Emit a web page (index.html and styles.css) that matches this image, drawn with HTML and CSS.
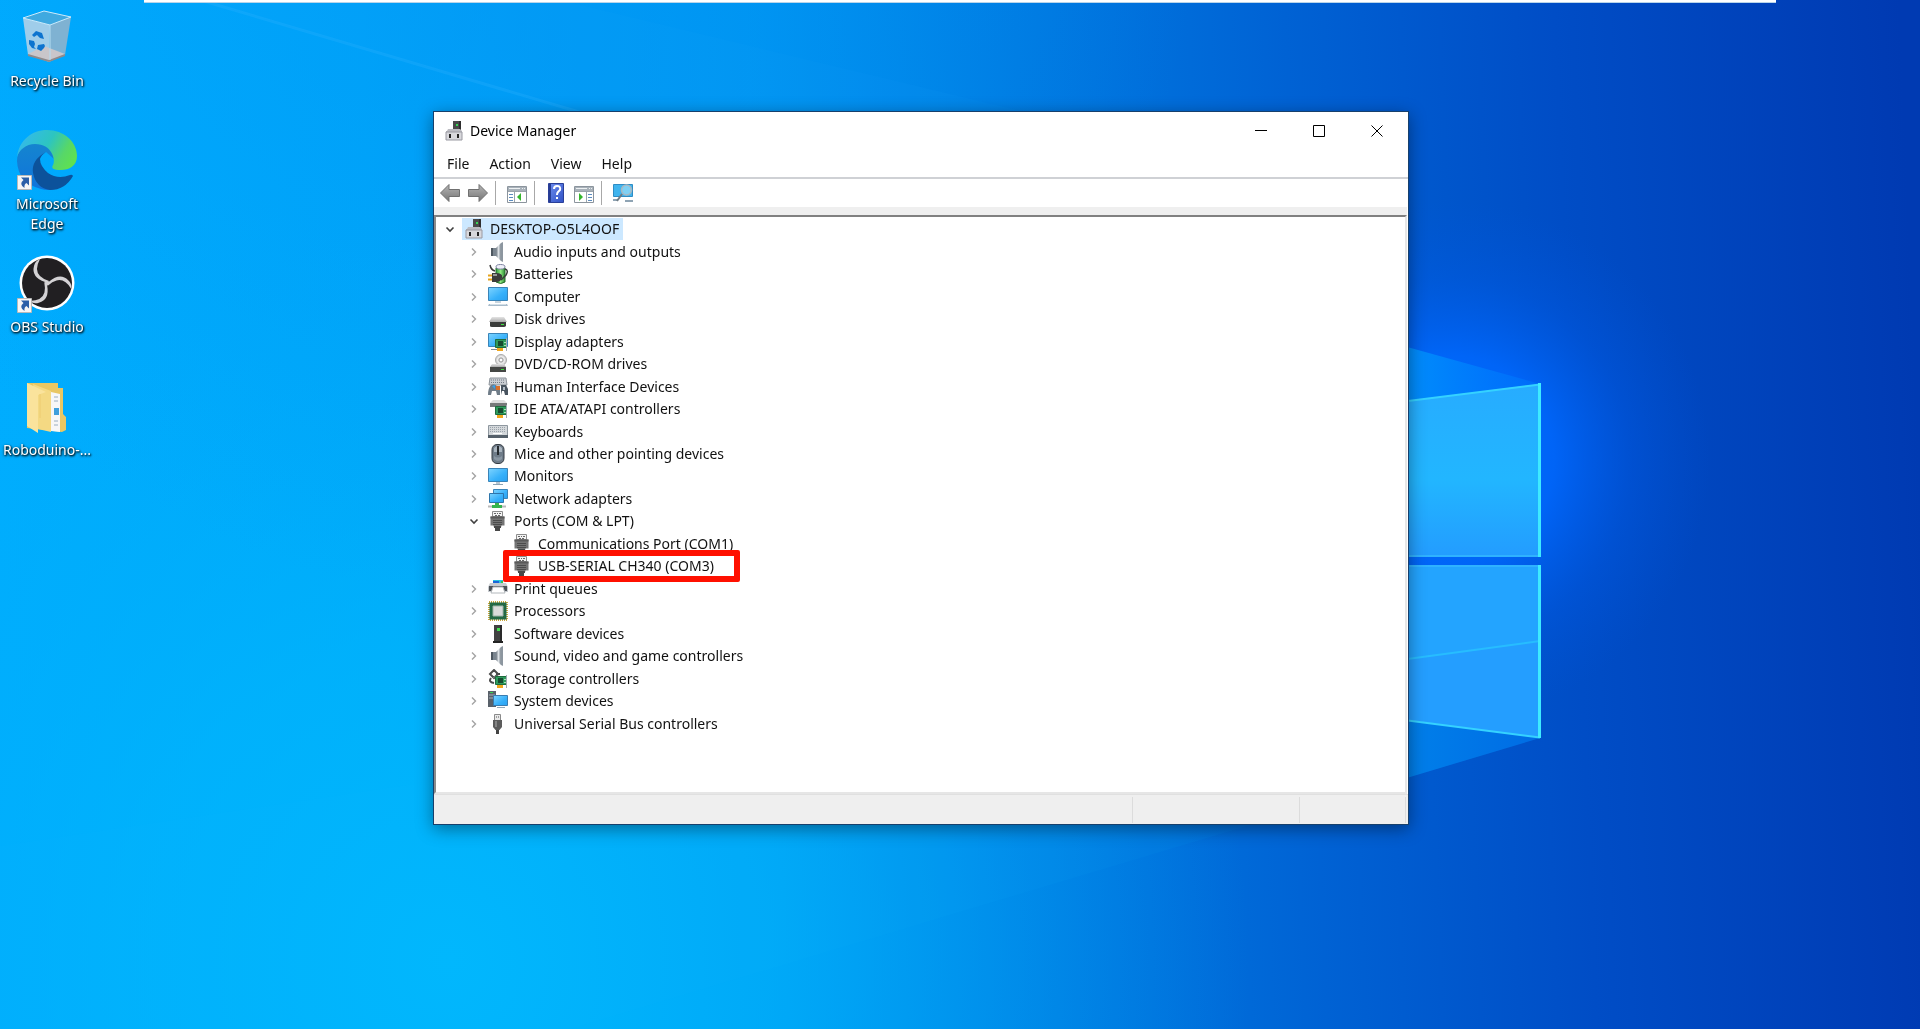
FILE: index.html
```html
<!DOCTYPE html>
<html lang="en">
<head>
<meta charset="utf-8">
<title>Device Manager</title>
<link rel="stylesheet" href="styles.css">
</head>
<body>
<svg class="defs" aria-hidden="true">
  <defs>
    <linearGradient id="g-screen" x1="0" y1="0" x2="1" y2="1"><stop offset="0" stop-color="#7ed4ff"/><stop offset="0.6" stop-color="#36b0fa"/><stop offset="1" stop-color="#2aa0f0"/></linearGradient>
    <linearGradient id="g-arrow" x1="0" y1="0" x2="0" y2="1"><stop offset="0" stop-color="#b5b5b5"/><stop offset="1" stop-color="#757575"/></linearGradient>
    <linearGradient id="g-metal" x1="0" y1="0" x2="1" y2="0"><stop offset="0" stop-color="#6c7680"/><stop offset="0.5" stop-color="#dde2e6"/><stop offset="1" stop-color="#7f8992"/></linearGradient>
    <linearGradient id="g-help" x1="0" y1="0" x2="1" y2="1"><stop offset="0" stop-color="#6f8ff0"/><stop offset="1" stop-color="#2f50c4"/></linearGradient>
    <linearGradient id="g-battery" x1="0" y1="0" x2="1" y2="0"><stop offset="0" stop-color="#2c9a3a"/><stop offset="0.5" stop-color="#8eea80"/><stop offset="1" stop-color="#2a8a34"/></linearGradient>
    <linearGradient id="g-drive" x1="0" y1="0" x2="0" y2="1"><stop offset="0" stop-color="#e4e4e4"/><stop offset="1" stop-color="#a9a9a9"/></linearGradient>
    <symbol id="pc" viewBox="0 0 20 20"><path d="M9 0h8v10H9z" fill="#4a4a4a"/><path d="M15 0h2v10h-2z" fill="#2e2e2e"/><path d="M12 3h2v2h-2z" fill="#35d655"/><path d="M3 10l1-2h12l2 2v2H2v-2z" fill="#bcbcc2"/><path d="M2 11h16v8H2z" fill="#d8d8dc" stroke="#9a9aa2"/><path d="M5 13h2v4H5zM13 13h2v4h-2z" fill="#222"/></symbol>
    <symbol id="speaker" viewBox="0 0 20 20"><path d="M3 6h5v8H3z" fill="#7a858f"/><path d="M3 6h2v8H3z" fill="#4d5760"/><path d="M8 6l5-5v18l-5-5z" fill="url(#g-metal)"/><path d="M13 1l2-1v20l-2-1z" fill="#8c969f"/></symbol>
    <symbol id="battery" viewBox="0 0 20 20"><path d="M8 4h9v14q-4 3-9 0z" fill="url(#g-battery)" stroke="#286c2c"/><ellipse cx="12.500" cy="2.800" rx="4.500" ry="2.300" fill="#eef0f8" stroke="#7c7fa0"/><path d="M2 1q1 5 5 6M17 5q4 1 1 6l-5 5" fill="none" stroke="#3a3a3a" stroke-width="1.500"/><path d="M0 11.500h5M0 15.500h5" stroke="#e5a31c" stroke-width="2"/><path d="M4 9h4q7 0 6 4.500T8 18H4z" fill="#3c3c3c"/><path d="M5 10h4v2H5z" fill="#999"/></symbol>
    <symbol id="computer" viewBox="0 0 20 20"><path d="M.5.5h19v13H.5z" fill="url(#g-screen)" stroke="#3a84b8"/><path d="M7 14h6v2H7z" fill="#c9d5de"/><path d="M1 17h18l1 2H0z" fill="#a9bccb"/><path d="M2 17.500h16" stroke="#d3dfe8"/></symbol>
    <symbol id="monitor" viewBox="0 0 20 20"><path d="M.5 2.500h19v13H.5z" fill="url(#g-screen)" stroke="#3a84b8"/><path d="M8 16h4v2H8z" fill="#b9c7d2"/><path d="M5 18h10v1H5z" fill="#8ea3b3"/></symbol>
    <symbol id="disk" viewBox="0 0 20 20"><path d="M4 8h12l3 5H1z" fill="url(#g-drive)"/><path d="M2 13h16v4q-1 1-2 1H4q-2 0-2-1z" fill="#3b3d3b"/><path d="M13 15h3v1h-3z" fill="#3ee03e"/></symbol>
    <symbol id="card" viewBox="0 0 20 20"><path d="M7.500 7.500h11v8h-11z" fill="#2f9a5c" stroke="#1d6b3d"/><path d="M10 9h5v5h-5z" fill="#164a30"/><path d="M16 10h2v1h-2zM16 13h2v1h-2z" fill="#a8e0b8"/><path d="M9 16h6v3H9z" fill="#f0a71d"/><path d="M18 6h1v13h-1z" fill="#a3acb3"/></symbol>
    <symbol id="display" viewBox="0 0 20 20"><path d="M.5 1.500h19v13H.5z" fill="url(#g-screen)" stroke="#3a84b8"/><path d="M3 17h6v1H3z" fill="#7f8a93"/><use href="#card"/></symbol>
    <symbol id="dvd" viewBox="0 0 20 20"><circle cx="13" cy="6" r="5.500" fill="#d9d9d9" stroke="#aaa"/><circle cx="13" cy="6" r="3.500" fill="none" stroke="#f0f0f0"/><circle cx="13" cy="6" r="2" fill="#fff" stroke="#999"/><path d="M4 10h12l2 3H2z" fill="url(#g-drive)"/><path d="M2 13h16v5H2z" fill="#454745"/><path d="M13 15h3v1h-3z" fill="#3ee03e"/></symbol>
    <symbol id="hid" viewBox="0 0 20 20"><path d="M2 1h16l1 7H1z" fill="#c9cdd2" stroke="#8d949b"/><path d="M3 3h14M3 5.500h14" stroke="#737b84" stroke-dasharray="1 1"/><path d="M3 8q3-2 6 1l3 0 0 9h-3l-1-4H4l-1 4H0q0-7 3-10z" fill="#6f7c88"/><path d="M4 9l3-1v4z" fill="#37a1ef"/><path d="M8 9h4v4H8z" fill="#da6f28"/><path d="M13 8h5l2 4v6h-3l-1-4h-2l-1 4z" fill="#48545f"/><path d="M15 10h2v3h-2z" fill="#b3bec8"/></symbol>
    <symbol id="ide" viewBox="0 0 20 20"><path d="M5 1h11l3 3H2z" fill="#dedede"/><path d="M2 4h17v4H2z" fill="#777a7a"/><use href="#card"/></symbol>
    <symbol id="keyboard" viewBox="0 0 20 20"><path d="M.5 3.500h19v11H.5z" fill="#d4d8db" stroke="#8e979f"/><path d="M2 5.500h16M2 7.500h16M2 9.500h16" stroke="#9aa2aa" stroke-dasharray="1 1"/><path d="M5 11.500h9" stroke="#fff"/><path d="M0 13h20v3H0z" fill="#55606a"/></symbol>
    <symbol id="mouse" viewBox="0 0 20 20"><rect x="4" y="0.500" width="12" height="19" rx="5" fill="#6f7c89" stroke="#343b42"/><path d="M6 4q4-4 8 0v4H6z" fill="#a9b4be"/><path d="M9 2h2v9H9z" fill="#252a2f"/><path d="M6 12q4 3 8 0v3q-4 4-8 0z" fill="#8996a2"/></symbol>
    <symbol id="network" viewBox="0 0 20 20"><path d="M5.500.5h14v9h-14z" fill="url(#g-screen)" stroke="#3a84b8"/><path d="M1.500 4.500h14v9h-14z" fill="url(#g-screen)" stroke="#2d75ab"/><path d="M7 14h4v3H7z" fill="#39b54a"/><path d="M4 16h10v3H4z" fill="#35b44e"/><path d="M0 17.500h4M14 17.500h4" stroke="#b9b9b9" stroke-width="2"/></symbol>
    <symbol id="port" viewBox="0 0 20 20"><path d="M4.500.5h10v5h-10z" fill="#f3f3f3" stroke="#8c8c8c"/><path d="M6 2.500h2M9 2.500h1M11 2.500h2M7 4.500h2M10 4.500h2" stroke="#666"/><path d="M2.500 5.500h14v9h-3v1h-8v-1h-3z" fill="#747474"/><path d="M2.500 5.500h14v2h-14z" fill="#5a5a5a"/><path d="M5 9.500h9M5 11.500h9M5 13.500h9" stroke="#4c4c4c"/><path d="M6 15h7v2h-1v3H7v-3H6z" fill="#484848"/></symbol>
    <symbol id="printer" viewBox="0 0 20 20"><path d="M5 1h10v4H5z" fill="#28c3e0"/><path d="M5 2h6v3H5z" fill="#1b65d8"/><path d="M13 2h2v2h-2z" fill="#36c24c"/><path d="M2 4h16l2 4v5H0V8z" fill="#c7cbd0"/><path d="M1 7h18v5H1z" fill="#4d5359"/><path d="M5 8h10l2 6H3z" fill="#fff" stroke="#b3b8bc"/></symbol>
    <symbol id="cpu" viewBox="0 0 20 20"><path d="M1 1h18v18H1z" fill="none" stroke="#c8a63a" stroke-width="2" stroke-dasharray="1 1"/><path d="M1.500 1.500h17v17h-17z" fill="#236a45"/><path d="M5 5h10v10H5z" fill="#d9dcdb" stroke="#9fb5a8"/></symbol>
    <symbol id="tower" viewBox="0 0 20 20"><path d="M6 1h8v16H6z" fill="#414141"/><path d="M12 1h2v16h-2z" fill="#2a2a2a"/><path d="M9 4h3v3H9z" fill="#42e050"/><path d="M5 17h10v2H5z" fill="#232323"/></symbol>
    <symbol id="storage" viewBox="0 0 20 20"><path d="M2 5l4-4 4 4-4 4zM8 5h4M3 9q-3 4 3 5" fill="none" stroke="#4b4b4b" stroke-width="2"/><path d="M5 9q4-4 8 0" stroke="#8a8a8a" fill="none"/><use href="#card"/></symbol>
    <symbol id="system" viewBox="0 0 20 20"><path d="M0 0h8v16H0z" fill="#59616a"/><path d="M1 4h6M1 7h4" stroke="#a7b0b8"/><path d="M2 1h3v1H2z" fill="#3bd351"/><path d="M5.500 4.500h14v10h-14z" fill="url(#g-screen)" stroke="#3a7cb0"/><path d="M9 16h8v1H9z" fill="#93a8b8"/></symbol>
    <symbol id="usb" viewBox="0 0 20 20"><path d="M6.500.5h6v6h-6z" fill="#e9e9e9" stroke="#8a8a8a"/><path d="M8 3h1M10 3h1" stroke="#555"/><path d="M5 6h9v7l-2.500 3h-4L5 13z" fill="#5c5c5c"/><path d="M7 7h2v6H7z" fill="#858585"/><path d="M8 16h3v4H8z" fill="#444"/></symbol>
    <symbol id="closed" viewBox="0 0 12 12"><path d="M4 2.500L7.500 6 4 9.500" fill="none" stroke="#a3a3a3" stroke-width="1.400"/></symbol>
    <symbol id="open" viewBox="0 0 12 12"><path d="M2.500 4.500L6 8l3.500-3.500" fill="none" stroke="#404040" stroke-width="1.600"/></symbol>
    <symbol id="shortcut" viewBox="0 0 15 15"><path d="M.5.5h14v14H.5z" fill="#f6f6f6" stroke="#b9b9b9"/><path d="M4 2.500h8v8L9.500 8Q7 9 7.500 13 1.500 9 6.500 5z" fill="#2c5fa8"/></symbol>
  </defs>
</svg>

<svg class="wallpaper" viewBox="0 0 1920 1029" preserveAspectRatio="none" aria-hidden="true">
  <defs>
    <linearGradient id="w-base" gradientUnits="userSpaceOnUse" x1="0" y1="560" x2="1920" y2="480">
      <stop offset="0" stop-color="#00adff"/><stop offset="0.200" stop-color="#00a8fb"/><stop offset="0.400" stop-color="#0096f2"/><stop offset="0.540" stop-color="#007be2"/><stop offset="0.680" stop-color="#0062d4"/><stop offset="0.820" stop-color="#004dc6"/><stop offset="1" stop-color="#003ab2"/>
    </linearGradient>
    <radialGradient id="w-low" gradientUnits="userSpaceOnUse" cx="450" cy="960" r="800"><stop offset="0" stop-color="#00b8fd" stop-opacity="0.950"/><stop offset="0.400" stop-color="#00b6fb" stop-opacity="0.600"/><stop offset="1" stop-color="#00a8f5" stop-opacity="0"/></radialGradient>
    <radialGradient id="w-top" gradientUnits="userSpaceOnUse" cx="500" cy="-100" r="700"><stop offset="0" stop-color="#0092f2" stop-opacity="0.500"/><stop offset="1" stop-color="#0096f5" stop-opacity="0"/></radialGradient>
    <radialGradient id="w-glow" gradientUnits="userSpaceOnUse" cx="1450" cy="460" r="260"><stop offset="0" stop-color="#0070ff"/><stop offset="0.400" stop-color="#0068ff" stop-opacity="0.850"/><stop offset="0.700" stop-color="#005cec" stop-opacity="0.350"/><stop offset="1" stop-color="#0055dc" stop-opacity="0"/></radialGradient>
    <linearGradient id="w-pane" x1="0" y1="0" x2="0" y2="1"><stop offset="0" stop-color="#27acff"/><stop offset="0.550" stop-color="#22b6ff"/><stop offset="1" stop-color="#239cff"/></linearGradient>
    <linearGradient id="w-ray" x1="0" y1="0" x2="1" y2="0"><stop offset="0" stop-color="#0090fb"/><stop offset="1" stop-color="#0078ff" stop-opacity="0.400"/></linearGradient>
    <linearGradient id="w-ray-low" x1="0" y1="0" x2="1" y2="0"><stop offset="0" stop-color="#0080ea"/><stop offset="1" stop-color="#006ce4"/></linearGradient>
  </defs>
  <path d="M0 0h1920v1029H0z" fill="url(#w-base)"/>
  <path d="M0 0h1920v1029H0z" fill="url(#w-low)"/>
  <path d="M0 0h1920v1029H0z" fill="url(#w-top)"/>
  <path d="M200 0L640 130H1100L560 0z" fill="#20a8ff" opacity="0.060"/>
  <path d="M200 0L640 130" stroke="#34b4ff" stroke-width="3" opacity="0.250"/>
  <path d="M0 846L440 780 1540 738 570 1029H0z" fill="#10c0ff" opacity="0.060"/>
  <path d="M1190 0h730v1029h-730z" fill="url(#w-glow)"/>
  <path d="M1400 345L1540 384 1400 402z" fill="url(#w-ray)"/>
  <path d="M1400 719L1540 738 1400 780z" fill="url(#w-ray-low)"/>
  <path d="M1400 402L1540 384V557H1400z" fill="url(#w-pane)"/>
  <path d="M1400 565H1540V738L1400 719z" fill="#249eff"/>
  <path d="M1400 565H1540V641L1400 660z" fill="#23a4ff"/>
  <path d="M1400 660L1540 641" stroke="#27bdff" stroke-width="2"/>
  <path d="M1400 556H1540M1400 566H1540" stroke="#2fb2ff" stroke-width="2"/>
  <path d="M1400 402L1540 384.500M1400 719.500L1540 737.500" stroke="#35d2ff" stroke-width="2"/>
  <path d="M1539.500 383V557M1539.500 565V738" stroke="#3eeaff" stroke-width="3"/>
</svg>

<main class="desktop">
  <div class="top-strip"></div>

  <nav class="shortcuts" aria-label="Desktop">
    <a class="shortcut" href="#recycle">
      <svg class="shortcut-icon" viewBox="0 -3 60 60"><path d="M6 8L33 15 32 50 11 45z" fill="#9fcdea"/><path d="M33 15L54 7 48 45 32 50z" fill="#7fb2d2"/><path d="M6 8L27 1 54 7 33 15z" fill="#3fa9e0" stroke="#cdeafa"/><path d="M11 44L27 36 48 44 32 52z" fill="#c9c6ca"/><path d="M11 44v2l21 6v-2zM32 50l16-6v2l-16 6z" fill="#8f8a8c"/><path d="M33 15v35" stroke="#b5ddf2"/><path d="M15 25l4-4 6 2 2 6-4-1-3-3-3 2zM12 30l5 1 1 3-1 3 2 2-4-1-3-4zM21 35l6-1 1 2-1 2-3 3-4-2z" fill="#0d74cf"/></svg>
      <span>Recycle Bin</span>
    </a>
    <a class="shortcut" href="#edge">
      <svg class="shortcut-icon" viewBox="0 0 60 60">
        <defs>
          <linearGradient id="e-top" x1="0" y1="0.200" x2="1" y2="0.600"><stop offset="0" stop-color="#35b8f0"/><stop offset="0.500" stop-color="#2dc5c0"/><stop offset="0.800" stop-color="#57d768"/><stop offset="1" stop-color="#5fe052"/></linearGradient>
          <linearGradient id="e-mid" x1="0" y1="0" x2="0" y2="1"><stop offset="0" stop-color="#1585cf"/><stop offset="1" stop-color="#0f74dc"/></linearGradient>
        </defs>
        <path d="M0 31C0 20 8 13 18 13 31 13 37 22 37 29L29 22Q20 28 21 40 23 55 38 59 31 61 24 59 1 53 0 31z" fill="url(#e-mid)"/>
        <path d="M29 22Q14 30 16 43 19 58 33 60 48 60 56 46 55 44 53 45 41 50 31 43 23 36 23 29 24 25 29 22z" fill="#0c529b"/>
        <path d="M0 27C2 10 15 0 30 0 47 0 60 12 60 26 60 36 52 40 44 40 36 40 34 38 36 35 39 30 35 14 18 14 9 14 2 20 0 27z" fill="url(#e-top)"/>
        <use href="#shortcut" x="0" y="45" width="15" height="15"/>
      </svg>
      <span>Microsoft Edge</span>
    </a>
    <a class="shortcut" href="#obs">
      <svg class="shortcut-icon" viewBox="0 0 60 60">
        <defs><path id="arm" d="M30 32L28 29Q14 24 17 13 18 8 23 6 17 17 23 23 26 26 32 28z" fill="#d4d2d5"/></defs>
        <circle cx="30" cy="30" r="27.500" fill="#fff"/><circle cx="30" cy="30" r="25" fill="#211f22"/>
        <use href="#arm"/><use href="#arm" transform="rotate(120 30 30)"/><use href="#arm" transform="rotate(240 30 30)"/>
        <use href="#shortcut" x="0" y="45" width="15" height="15"/>
      </svg>
      <span>OBS Studio</span>
    </a>
    <a class="shortcut" href="#roboduino">
      <svg class="shortcut-icon" viewBox="0 -3 60 60"><path d="M10 4h31v5h5v26l3 3v13l-4 2-35-4z" fill="#e9c763"/><path d="M34 13l9 2v38l-9-1z" fill="#f7f7f7"/><path d="M37 18h4M37 22h4M37 42h4M37 46h4" stroke="#9aaec0"/><path d="M37 29h5v7h-5z" fill="#3f9fdc"/><path d="M16 5l18 7v41l-13-3z" fill="#f4d983"/><path d="M10 4l19 9-8 3v38L10 47z" fill="#fae39c"/><path d="M23 15v24" stroke="#edcc70"/></svg>
      <span>Roboduino-...</span>
    </a>
  </nav>

  <section class="window" aria-label="Device Manager">
    <header class="titlebar">
      <svg class="icon"><use href="#pc"/></svg>
      <h1>Device Manager</h1>
      <div class="caption-buttons">
        <button type="button" aria-label="Minimize"><svg viewBox="0 0 12 12"><path d="M0 5.500h12" stroke="#000"/></svg></button>
        <button type="button" aria-label="Maximize"><svg viewBox="0 0 12 12"><path d="M.5.5h11v11H.5z" fill="none" stroke="#000"/></svg></button>
        <button type="button" aria-label="Close"><svg viewBox="0 0 12 12"><path d="M.5.5l11 11M11.500.5l-11 11" stroke="#000"/></svg></button>
      </div>
    </header>
    <nav class="menubar" aria-label="Menu">
      <button type="button">File</button><button type="button">Action</button><button type="button">View</button><button type="button">Help</button>
    </nav>
    <div class="toolbar">
      <button type="button" aria-label="Back"><svg class="icon" viewBox="0 0 20 20"><path d="M.5 10L9 1.500V6.500h10.500v7H9v5z" fill="url(#g-arrow)" stroke="#707070"/></svg></button>
      <button type="button" aria-label="Forward"><svg class="icon" viewBox="0 0 20 20"><path d="M19.500 10L11 1.500V6.500H.5v7H11v5z" fill="url(#g-arrow)" stroke="#707070"/></svg></button>
      <span class="divider"></span>
      <button type="button" aria-label="Show console tree"><svg class="icon" viewBox="0 0 20 20"><path d="M.5 3.500h19v16H.5z" fill="#fff" stroke="#8b949d"/><path d="M1 4h18v4H1z" fill="#a9b2ba"/><path d="M2 5.500h11M15 5.500h1M17 5.500h1" stroke="#eef1f3"/><path d="M7.500 9v10M1 8.500h18" stroke="#9aa3ab"/><path d="M2 11.500h4M2 14.500h4M2 17.500h4" stroke="#5b8cc0"/><path d="M14 10v8l-4-4z" fill="#35b52c"/></svg></button>
      <span class="divider"></span>
      <button type="button" aria-label="Help"><svg class="icon" viewBox="0 0 20 20"><path d="M2.500.5h15v19h-15z" fill="url(#g-help)" stroke="#2a3f98"/><path d="M3 1h2v18H3z" fill="#263c94"/><path d="M8 6q0-3 3-3 4 0 3 4l-2 2q-1 1-1 3" fill="none" stroke="#fff" stroke-width="2"/><path d="M10 14h2v2h-2z" fill="#fff"/></svg></button>
      <button type="button" aria-label="Show action pane"><svg class="icon" viewBox="0 0 20 20"><path d="M.5 3.500h19v16H.5z" fill="#fff" stroke="#8b949d"/><path d="M1 4h18v4H1z" fill="#a9b2ba"/><path d="M2 5.500h11M15 5.500h1M17 5.500h1" stroke="#eef1f3"/><path d="M12.500 9v10M1 8.500h18" stroke="#9aa3ab"/><path d="M14 11.500h4M14 14.500h4M14 17.500h4" stroke="#5b8cc0"/><path d="M5 10v8l4-4z" fill="#35b52c"/></svg></button>
      <span class="divider"></span>
      <button type="button" aria-label="Scan for hardware changes"><svg class="icon" viewBox="0 0 20 20"><path d="M.5 1.500h19v12H.5z" fill="#40b4ee" stroke="#2f8cc4"/><path d="M0 17h5M12 18h8" stroke="#8fa4b4" stroke-width="2"/><path d="M9 11l-5 7" stroke="#6f7c86" stroke-width="2"/><circle cx="13.500" cy="7" r="5" fill="#7fd0f4" stroke="#a8b8c2" stroke-width="1.500"/></svg></button>
    </div>
    <div class="tree-frame">
      <ul class="tree">
        <li class="root"><svg class="chevron"><use href="#open"/></svg><span class="selected"><svg class="icon"><use href="#pc"/></svg>DESKTOP-O5L4OOF</span></li>
        <li><svg class="chevron"><use href="#closed"/></svg><svg class="icon"><use href="#speaker"/></svg>Audio inputs and outputs</li>
        <li><svg class="chevron"><use href="#closed"/></svg><svg class="icon"><use href="#battery"/></svg>Batteries</li>
        <li><svg class="chevron"><use href="#closed"/></svg><svg class="icon"><use href="#computer"/></svg>Computer</li>
        <li><svg class="chevron"><use href="#closed"/></svg><svg class="icon"><use href="#disk"/></svg>Disk drives</li>
        <li><svg class="chevron"><use href="#closed"/></svg><svg class="icon"><use href="#display"/></svg>Display adapters</li>
        <li><svg class="chevron"><use href="#closed"/></svg><svg class="icon"><use href="#dvd"/></svg>DVD/CD-ROM drives</li>
        <li><svg class="chevron"><use href="#closed"/></svg><svg class="icon"><use href="#hid"/></svg>Human Interface Devices</li>
        <li><svg class="chevron"><use href="#closed"/></svg><svg class="icon"><use href="#ide"/></svg>IDE ATA/ATAPI controllers</li>
        <li><svg class="chevron"><use href="#closed"/></svg><svg class="icon"><use href="#keyboard"/></svg>Keyboards</li>
        <li><svg class="chevron"><use href="#closed"/></svg><svg class="icon"><use href="#mouse"/></svg>Mice and other pointing devices</li>
        <li><svg class="chevron"><use href="#closed"/></svg><svg class="icon"><use href="#monitor"/></svg>Monitors</li>
        <li><svg class="chevron"><use href="#closed"/></svg><svg class="icon"><use href="#network"/></svg>Network adapters</li>
        <li><svg class="chevron"><use href="#open"/></svg><svg class="icon"><use href="#port"/></svg>Ports (COM &amp; LPT)</li>
        <li class="leaf"><svg class="icon"><use href="#port"/></svg>Communications Port (COM1)</li>
        <li class="leaf marked"><svg class="icon"><use href="#port"/></svg>USB-SERIAL CH340 (COM3)</li>
        <li><svg class="chevron"><use href="#closed"/></svg><svg class="icon"><use href="#printer"/></svg>Print queues</li>
        <li><svg class="chevron"><use href="#closed"/></svg><svg class="icon"><use href="#cpu"/></svg>Processors</li>
        <li><svg class="chevron"><use href="#closed"/></svg><svg class="icon"><use href="#tower"/></svg>Software devices</li>
        <li><svg class="chevron"><use href="#closed"/></svg><svg class="icon"><use href="#speaker"/></svg>Sound, video and game controllers</li>
        <li><svg class="chevron"><use href="#closed"/></svg><svg class="icon"><use href="#storage"/></svg>Storage controllers</li>
        <li><svg class="chevron"><use href="#closed"/></svg><svg class="icon"><use href="#system"/></svg>System devices</li>
        <li><svg class="chevron"><use href="#closed"/></svg><svg class="icon"><use href="#usb"/></svg>Universal Serial Bus controllers</li>
      </ul>
    </div>
    <footer class="statusbar"><span></span><span></span><span></span></footer>
  </section>
</main>
</body>
</html>
```
FILE: styles.css
```css
*,
*::after {
  box-sizing: border-box;
}

body {
  margin: 0;
  min-height: 100vh;
  background: #0078d7;
  color: #111;
  font: 14px/20px "Noto Sans", "Open Sans", sans-serif;
}

button {
  padding: 0;
  border: 0;
  background: none;
  color: inherit;
  font: inherit;
}

.defs {
  position: absolute;
  width: 0;
  height: 0;
}

.wallpaper {
  position: fixed;
  inset: 0;
  width: 100%;
  height: 100%;
}

.desktop {
  position: relative;
  min-height: 100vh;
  overflow: hidden;
}

.top-strip {
  width: 85%;
  height: 3px;
  margin: 0 auto;
  border-bottom: 1px solid #b8d4ea;
  background: #fff;
}

/* Desktop shortcuts */
.shortcuts {
  display: grid;
  grid-auto-rows: 123px;
  width: 94px;
  padding-top: 4px;
}

.shortcut {
  display: flex;
  flex-direction: column;
  align-items: center;
  gap: 4px;
  color: #fff;
  text-align: center;
  text-decoration: none;
  text-shadow: 1px 1px 2px #000, 0 1px 3px rgba(0, 0, 0, 0.8);
}

.shortcut-icon {
  width: 60px;
  height: 60px;
}

/* Window */
.window {
  position: absolute;
  top: 111px;
  left: 433px;
  display: flex;
  flex-direction: column;
  width: 976px;
  height: 714px;
  border: 1px solid #17406c;
  background: #fff;
  box-shadow: 0 4px 16px rgba(0, 0, 0, 0.4);
}

.icon {
  flex: none;
  width: 20px;
  height: 20px;
}

.titlebar {
  display: flex;
  align-items: center;
  height: 37px;
  padding: 0 2px 0 10px;
}

.titlebar h1 {
  margin: 0 auto 0 6px;
  color: #000;
  font-size: 14px;
  font-weight: 400;
}

.caption-buttons {
  display: flex;
}

.caption-buttons button {
  display: grid;
  place-items: center;
  width: 58px;
  height: 37px;
}

.caption-buttons svg {
  width: 12px;
  height: 12px;
}

.menubar {
  display: flex;
  gap: 20px;
  height: 30px;
  padding: 2px 13px 0;
  border-bottom: 2px solid #cfd1d5;
}

.toolbar {
  display: flex;
  align-items: center;
  gap: 6px;
  height: 28px;
  padding-left: 6px;
}

.toolbar button {
  display: flex;
  padding-right: 2px;
}

.divider {
  width: 1px;
  height: 24px;
  margin-left: -1px;
  background: #a8a8a8;
}

.divider + button {
  margin-left: 5px;
}

.tree-frame {
  display: flex;
  flex: 1;
  margin-right: 1px;
  padding-top: 8px;
  background: #efefef;
}

.tree {
  display: grid;
  flex: 1;
  grid-auto-rows: 1fr;
  margin: 0;
  padding: 1px 0 57px 26px;
  border: 2px solid #e6e6e6;
  border-top-color: #808080;
  border-left-color: #8a8a8a;
  background: #fff;
  list-style: none;
}

.tree li {
  position: relative;
  display: flex;
  align-items: center;
  gap: 6px;
  min-height: 0;
  padding-left: 6px;
}

.tree .root {
  margin-left: -24px;
}

.chevron {
  flex: none;
  width: 12px;
  height: 12px;
  margin-right: 2px;
}

.root .chevron {
  margin-right: 0;
}

.selected {
  display: flex;
  align-items: center;
  gap: 6px;
  height: 22px;
  padding: 0 4px 0 2px;
  background: #cce8ff;
}

.tree .leaf {
  padding-left: 50px;
}

/* Red frame drawn over the serial port entry */
.marked::after {
  position: absolute;
  top: -5px;
  left: 41px;
  width: 237px;
  height: 32px;
  border: 6px solid #ff1000;
  border-radius: 2px;
  content: "";
}

.statusbar {
  display: grid;
  grid-template-columns: 1fr 167px 106px;
  height: 30px;
  padding: 2px 2px 1px 0;
  border-top: 1px solid #e0e0e0;
  background: #efefef;
}

.statusbar span {
  border-right: 1px solid #dcdcdc;
}
```
